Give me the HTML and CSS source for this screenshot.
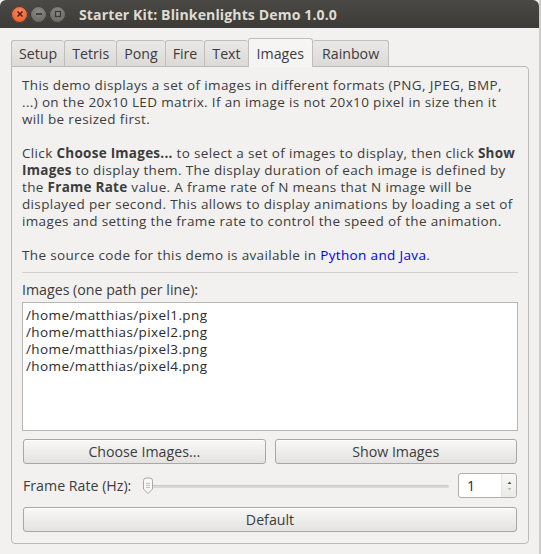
FILE: index.html
```html
<!DOCTYPE html>
<html>
<head>
<meta charset="utf-8">
<link rel="stylesheet" href="styles.css">
</head>
<body>
<div class="window">
  <div class="titlebar">
    <div class="wbtns">
      <span class="wb close"><svg width="10" height="10" viewBox="0 0 10 10"><path d="M2.5 2.5L7.5 7.5M7.5 2.5L2.5 7.5" stroke="#5a1a08" stroke-width="1.6"/></svg></span>
      <span class="wb"><svg width="10" height="10" viewBox="0 0 10 10"><path d="M2 5H8" stroke="#3a3935" stroke-width="1.8"/></svg></span>
      <span class="wb"><svg width="10" height="10" viewBox="0 0 10 10"><rect x="2.5" y="2.5" width="5" height="5" fill="none" stroke="#3a3935" stroke-width="1.3"/></svg></span>
    </div>
    <div class="title">Starter Kit: Blinkenlights Demo 1.0.0</div>
  </div>
  <div class="body">
    <div class="tabs">
      <div class="tab">Setup</div>
      <div class="tab">Tetris</div>
      <div class="tab">Pong</div>
      <div class="tab">Fire</div>
      <div class="tab">Text</div>
      <div class="tab active">Images</div>
      <div class="tab">Rainbow</div>
    </div>
    <div class="pane">
      <p class="para">This demo displays a set of images in different formats (PNG, JPEG, BMP,<br>...) on the 20x10 LED matrix. If an image is not 20x10 pixel in size then it<br>will be resized first.</p>
      <p class="para">Click <b>Choose Images...</b> to select a set of images to display, then click <b>Show</b><br><b>Images</b> to display them. The display duration of each image is defined by<br>the <b>Frame Rate</b> value. A frame rate of N means that N image will be<br>displayed per second. This allows to display animations by loading a set of<br>images and setting the frame rate to control the speed of the animation.</p>
      <p class="para">The source code for this demo is available in <a class="link">Python and Java</a>.</p>
      <div class="sep"></div>
      <div class="label">Images (one path per line):</div>
      <div class="textbox">/home/matthias/pixel1.png<br>/home/matthias/pixel2.png<br>/home/matthias/pixel3.png<br>/home/matthias/pixel4.png</div>
      <div class="btnrow">
        <div class="btn">Choose Images...</div>
        <div class="btn">Show Images</div>
      </div>
      <div class="raterow">
        <div class="ratelabel">Frame Rate (Hz):</div>
        <div class="slider">
          <div class="track"></div>
          <svg class="handle" width="12" height="18" viewBox="0 0 12 18"><path d="M1.5 3.5Q1.5 1 4 1H8Q10.5 1 10.5 3.5V12L6 16.5L1.5 12Z" fill="#f6f6f5" stroke="#a9a7a3"/><path d="M4 6.5H8M4 8.5H8M4 10.5H8" stroke="#b5b3af" stroke-width="0.8"/></svg>
        </div>
        <div class="spin">
          <div class="spinval">1</div>
          <div class="spinarrows">
            <svg width="7" height="16" viewBox="0 0 7 16"><path d="M1.5 6L3.5 3.5L5.5 6Z" fill="#555"/><path d="M1.5 10L3.5 12.5L5.5 10Z" fill="#bbb"/></svg>
          </div>
        </div>
      </div>
      <div class="btn wide">Default</div>
    </div>
  </div>
</div>
</body>
</html>
```

FILE: styles.css
```css
* { box-sizing: border-box; }
html, body { margin: 0; padding: 0; background: #f2f1f0; }
body { width: 541px; height: 554px; overflow: hidden; font-family: "Open Sans", "DejaVu Sans", sans-serif; }
.window { width: 541px; height: 554px; background: #f2f1f0; display: flex; flex-direction: column; border-right: 2px solid #cfcdca; }
.titlebar { height: 28px; background: linear-gradient(#4a4945, #3c3b37); border-radius: 6px 6px 0 0; display: flex; align-items: center; padding-left: 11px; }
.wbtns { display: flex; gap: 2px; }
.wb { width: 17px; height: 17px; border-radius: 50%; background: radial-gradient(circle at 50% 35%, #8c8b86, #605e59); display: flex; align-items: center; justify-content: center; box-shadow: inset 0 0 0 1px #3a3935; }
.wb.close { background: radial-gradient(circle at 50% 35%, #f58a5e, #e2521f); }
.title { margin-left: 13px; color: #dfdbd2; font-weight: bold; font-size: 14.1px; letter-spacing: 0.1px; }
.body { flex: 1; padding: 10px 10px 10px 11px; display: flex; flex-direction: column; }
.tabs { display: flex; align-items: flex-end; height: 28px; position: relative; z-index: 1; }
.tab { height: 26px; padding: 0 7px; border: 1px solid #c0beba; border-right: none; border-bottom: none; border-radius: 3px 3px 0 0; background: linear-gradient(#eae9e7, #dcdad7); color: #3c3c3c; font-size: 14.2px; display: flex; align-items: center; }
.tab:nth-child(7) { border-right: 1px solid #c0beba; padding: 0 9px; }
.tab.active { height: 29px; background: #f5f5f4; border-right: 1px solid #c0beba; margin-bottom: -1px; padding: 0 8px; }
.tab.active + .tab { border-left: none; }
.pane { flex: 1; border: 1px solid #bdbbb7; border-radius: 0 4px 4px 4px; background: #f2f1f0; padding: 10px 10px 10px 10px; display: flex; flex-direction: column; }
.para { margin: 0 0 17px 0; font-size: 13.5px; letter-spacing: 0.35px; line-height: 17px; color: #3c3c3c; white-space: nowrap; }
.para b { color: #3c3c3c; letter-spacing: 0.25px; }
.link { color: #0000ee; }
.sep { height: 1px; background: #d2d0cd; margin: -9px 0 8px 0; }
.label { font-size: 14.2px; color: #3c3c3c; line-height: 17px; margin-bottom: 4px; }
.textbox { height: 129px; background: #fff; border: 1px solid #b7b6b3; padding: 4px 3px; font-size: 13.5px; letter-spacing: 0.4px; line-height: 17px; color: #2a2a2a; }
.btnrow { display: flex; gap: 9px; margin-top: 8px; padding: 0 1px; }
.btn { flex: 1; height: 25px; border: 1px solid #a9a7a3; border-radius: 3px; background: linear-gradient(#f8f8f7, #e3e2e0); display: flex; align-items: center; justify-content: center; font-size: 14.2px; color: #3c3c3c; box-shadow: inset 0 1px 0 #fff; }
.raterow { display: flex; align-items: center; height: 25px; margin-top: 9px; padding-left: 1px; }
.ratelabel { font-size: 14.2px; color: #3c3c3c; width: 119px; }
.slider { flex: 1; position: relative; height: 20px; margin-right: 9px; }
.track { position: absolute; left: 2px; right: 0; top: 9px; height: 3px; background: #d9d8d5; border-radius: 2px; border-top: 1px solid #cac8c5; }
.handle { position: absolute; left: 0; top: 1px; }
.spin { width: 59px; height: 25px; border: 1px solid #b1afab; border-radius: 3px; background: #fff; display: flex; margin-right: 1px; }
.spinval { flex: 1; font-size: 14.2px; color: #2a2a2a; padding-left: 8px; display: flex; align-items: center; }
.spinarrows { width: 15px; display: flex; align-items: center; justify-content: center; background: linear-gradient(#f7f7f6, #ebeae8); border-left: 1px solid #e4e3e1; border-radius: 0 3px 3px 0; }
.btn.wide { flex: none; margin-top: 9px; margin-left: 1px; margin-right: 1px; }
```
